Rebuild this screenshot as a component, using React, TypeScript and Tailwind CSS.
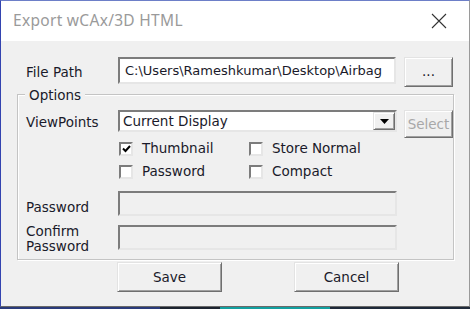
import React from 'react';

const sunken =
  'border-2 border-t-[#7c7c7c] border-l-[#7c7c7c] border-r-[#e6e6e6] border-b-[#e6e6e6]';
const raised =
  'border border-t-[#e3e3e3] border-l-[#e3e3e3] border-r-[#6f6f6f] border-b-[#6f6f6f] shadow-[inset_1px_1px_0_#ffffff,inset_-1px_-1px_0_#a0a0a0]';

function Checkbox({ label, checked = false }: { label: string; checked?: boolean }) {
  return (
    <div className="flex items-center h-[23px]">
      <div className={`w-[14px] h-[14px] bg-white flex items-center justify-center ${sunken}`}>
        {checked && (
          <svg width="9" height="8" viewBox="0 0 9 8">
            <path d="M1 3.5 L3.5 6 L8 1" stroke="#000" strokeWidth="2" fill="none" />
          </svg>
        )}
      </div>
      <span className="ml-[9px] text-[13.5px] text-[#1a1a2a]">{label}</span>
    </div>
  );
}

export default function App() {
  return (
    <div className="w-[470px] h-[309px] overflow-hidden bg-[#1f2a3a] font-['DejaVu_Sans',sans-serif]">
      {/* Dialog window */}
      <div className="w-[470px] h-[307px] flex flex-col border-t border-l border-r border-b border-t-[#6d7fc8] border-l-[#3344b0] border-r-[#9a9a9a] border-b-[#6a6a6a]">
        {/* Title bar */}
        <div className="h-[40px] bg-white flex items-center justify-between pl-[12px] pr-[22px]">
          <span className="text-[15.5px] text-[#9a9a9a] font-['Noto_Sans',sans-serif] tracking-[0.3px]">
            Export wCAx/3D HTML
          </span>
          <svg width="16" height="16" viewBox="0 0 16 16">
            <path d="M1 1 L15 15 M15 1 L1 15" stroke="#333" strokeWidth="1.1" fill="none" />
          </svg>
        </div>

        {/* Body */}
        <div className="flex-1 bg-[#f0f0f0] pt-[16px]">
          {/* File path row */}
          <div className="flex items-start">
            <div className="w-[117px] pl-[25px] pt-[5px] text-[13.5px] text-[#1a1a2a]">File Path</div>
            <div className={`w-[278px] h-[27px] bg-white flex items-center pl-[5px] overflow-hidden whitespace-nowrap text-[13px] text-[#1a1a2a] ${sunken}`}>
              C:\Users\Rameshkumar\Desktop\Airbag
            </div>
            <button className={`ml-[8px] w-[49px] h-[30px] bg-[#f0f0f0] text-[13.5px] text-[#1a1a2a] pb-[2px] ${raised}`}>
              ...
            </button>
          </div>

          {/* Options group */}
          <div className="relative ml-[16px] mt-[7px] w-[437px] h-[166px] border border-[#c4c4c4] shadow-[inset_1px_1px_0_#ffffff,1px_1px_0_#ffffff] pt-[15px]">
            <span className="absolute left-[7px] top-[-10px] px-[4px] bg-[#f0f0f0] text-[13.5px] text-[#1a1a2a]">
              Options
            </span>

            {/* ViewPoints */}
            <div className="flex items-start">
              <div className="w-[100px] pl-[8px] pt-[2px] text-[13.5px] text-[#1a1a2a]">ViewPoints</div>
              <div className={`w-[279px] h-[22px] bg-white flex items-center justify-between ${sunken}`}>
                <span className="pl-[3px] text-[13.5px] text-[#1a1a2a]">Current Display</span>
                <div className={`w-[22px] h-[18px] bg-[#f0f0f0] flex items-center justify-center ${raised}`}>
                  <svg width="9" height="5" viewBox="0 0 9 5">
                    <path d="M0 0 L9 0 L4.5 5 Z" fill="#000" />
                  </svg>
                </div>
              </div>
              <button className={`ml-[7px] w-[49px] h-[28px] bg-[#f0f0f0] text-[13.5px] text-[#a8a8a8] ${raised}`}>
                Select
              </button>
            </div>

            {/* Checkboxes */}
            <div className="flex ml-[101px] -mt-[1px]">
              <div className="w-[130px]">
                <Checkbox label="Thumbnail" checked />
                <Checkbox label="Password" />
              </div>
              <div>
                <Checkbox label="Store Normal" />
                <Checkbox label="Compact" />
              </div>
            </div>

            {/* Password */}
            <div className="flex items-end mt-[8px]">
              <div className="w-[100px] pl-[8px] text-[13.5px] text-[#1a1a2a] leading-[16px] pb-[1px]">Password</div>
              <div className={`w-[279px] h-[25px] bg-[#f0f0f0] ${sunken}`} />
            </div>

            {/* Confirm password */}
            <div className="flex items-start mt-[9px]">
              <div className="w-[100px] pl-[8px] text-[13.5px] text-[#1a1a2a] leading-[15px] -mt-[1px]">
                Confirm
                <br />
                Password
              </div>
              <div className={`w-[279px] h-[25px] bg-[#f0f0f0] ${sunken}`} />
            </div>
          </div>

          {/* Buttons */}
          <div className="flex mt-[2px] pl-[116px]">
            <button className={`w-[105px] h-[30px] bg-[#f0f0f0] text-[13.5px] text-[#1a1a2a] ${raised}`}>Save</button>
            <button className={`ml-[72px] w-[105px] h-[30px] bg-[#f0f0f0] text-[13.5px] text-[#1a1a2a] ${raised}`}>Cancel</button>
          </div>
        </div>
      </div>
      <div className="flex h-[2px]">
        <div className="w-[160px] bg-[#2a3b7a]" />
        <div className="w-[60px] bg-[#1c2430]" />
        <div className="w-[110px] bg-[#12a0a0]" />
      </div>
    </div>
  );
}
